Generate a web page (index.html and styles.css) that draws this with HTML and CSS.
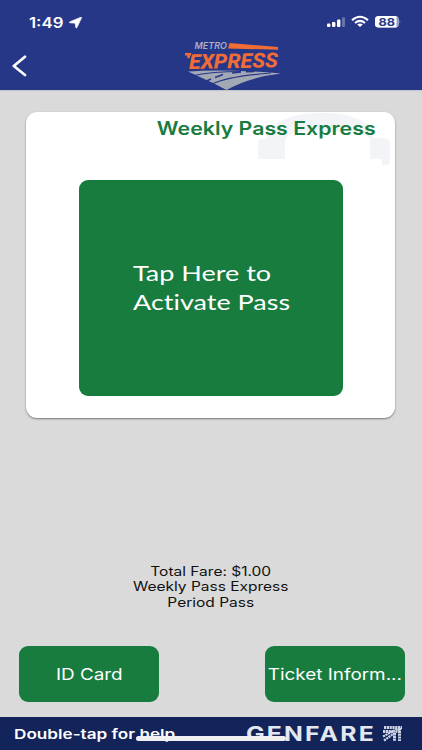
FILE: index.html
```
<!DOCTYPE html>
<html lang="en">
<head>
<meta charset="utf-8">
<title>Metro Express</title>
<link rel="stylesheet" href="styles.css">
</head>
<body>
<header class="header">
  <div class="status">
    <span class="time">1:49</span>
    <svg class="location" width="14" height="12" viewBox="0 0 14 12"><path d="M12.7.6 7.9 10.7Q7.2 11.6 6.8 10.5L6.1 6.2.8 5.8Q-.2 5.2.9 4.7L11.8.3Q12.8 0 12.7.6Z" fill="#fff" stroke="#fff" stroke-width=".6"/></svg>
    <svg class="indicators" width="76" height="14" viewBox="0 0 76 14">
      <g fill="#fff"><rect x="3" y="8.6" width="3.4" height="3.4" rx="1"/><rect x="8" y="7" width="3.4" height="5" rx="1"/><rect x="13" y="4.6" width="3.4" height="7.4" rx="1"/><rect x="18" y="2.3" width="3" height="9.7" rx="1" opacity=".3"/></g>
      <g fill="none" stroke="#fff" stroke-width="2.1"><path d="M28 5.2Q36 -1.7 44 5.2"/><path d="M31 8Q36 3.8 41 8"/></g><path d="M33.2 9.4Q36 7.5 38.8 9.4L36 12Z" fill="#fff"/>
      <rect x="51" y="1" width="24" height="11.6" rx="3.6" fill="#969dc7"/><path d="M54.6 1H72.5V12.6H54.6Q51 12.6 51 9V4.6Q51 1 54.6 1Z" fill="#fff"/><path d="M75.6 5Q77.2 6.8 75.6 8.6Z" fill="#969dc7"/>
      <text class="battery" x="54.5" y="10.8" textLength="16.5" lengthAdjust="spacingAndGlyphs">88</text>
    </svg>
  </div>
  <div class="nav">
    <svg class="back" width="16" height="22" viewBox="0 0 16 22"><path d="M14 1.8 2.8 11 14 20" fill="none" stroke="#fff" stroke-width="2.7" stroke-linecap="round" stroke-linejoin="round"/></svg>
    <svg class="logo" width="100" height="50" viewBox="0 0 100 50">
      <text class="metro" x="9.5" y="8.7" textLength="32.5" lengthAdjust="spacingAndGlyphs">METRO</text>
      <path d="M44.5 3 93 7V9.7L43 8.5Z" fill="#f26c35"/>
      <path d="M0 13H6.5L4.2 18.5 2 17.5 2.5 15.5H0Z" fill="#f26c35"/>
      <text class="express" x="4" y="29" textLength="89" lengthAdjust="spacingAndGlyphs" transform="skewY(-1)">EXPRESS</text>
      <path d="M3 31.5Q37 28.500 96 33.500 65 37 41.500 50L28 43Q16 37.500 3 31.500Z" fill="#a3a9b4"/>
      <g fill="none" stroke="#263788"><path d="M9 35.5Q27 31.5 56 31.5M27 44Q44 36 86 33" stroke-width="1.2"/><path d="m38 34.500-8 3m-4 1.500-7 3m28-9 9-1m5-.2 8-.3" stroke-width="1.400"/></g>
    </svg>
  </div>
</header>
<main class="content">
  <section class="card">
    <svg class="watermark" width="132" height="56" viewBox="0 0 132 56"><path d="M0 31Q0 27 4 27H8Q10 18 20 11 34 1 62 1 94 0 112 14 115 17 115 26H127Q132 27 132 31V49Q132 53 128 53H124V47H112V26Q104 21 90 19H40Q28 22 27 29V47H2Q0 47 0 45Z" fill="#f2f4f7"/></svg>
    <h1 class="title"><span class="wide">Weekly Pass Express</span></h1>
    <button class="activate"><span class="wide">Tap Here to<br>Activate Pass</span></button>
  </section>
  <section class="fare">
    <span class="wide">Total Fare: $1.00<br>Weekly Pass Express<br>Period Pass</span>
  </section>
  <nav class="actions">
    <button class="action"><span class="wide">ID Card</span></button>
    <button class="action"><span class="wide">Ticket Inform...</span></button>
  </nav>
</main>
<footer class="footer">
  <span class="help">Double-tap for help</span>
  <span class="brand">
    <svg width="158" height="20" viewBox="0 0 158 20">
      <text class="genfare" x="0" y="16.5" textLength="130" lengthAdjust="spacingAndGlyphs">GENFARE</text>
      <g fill="none" stroke="#cdd3e2"><path d="M138 3.500H156M137 7.500H147M153.500 4V17M148.500 9V17" stroke-width="3" stroke-dasharray="2.200 .6"/><path d="m137 12.500 15-8m-14 12 17-12" stroke-width="2.200" stroke-dasharray="2.200 .6"/></g>
    </svg>
  </span>
  <i class="home-indicator"></i>
</footer>
</body>
</html>
```
FILE: styles.css
```
* { box-sizing: border-box; }
body {
  margin: 0;
  width: 422px;
  height: 750px;
  display: flex;
  flex-direction: column;
  overflow: hidden;
  background: #dadada;
  font-family: Inter, "Liberation Sans", sans-serif;
}
button { border: 0; padding: 0; font: inherit; color: #fff; background: #187c3f; }
.wide { display: inline-block; white-space: nowrap; transform: scaleX(1.2); }
.header { height: 90px; background: #263788; color: #fff; box-shadow: 0 1px 1px #c5c5cc; }
.status { height: 40px; display: flex; align-items: flex-start; padding: 15px 22px 0 29px; }
.time { width: 40px; font-size: 14px; line-height: 15px; font-weight: 600; transform: scaleX(1.2); transform-origin: left; }
.location { margin-top: 2px; }
.indicators { margin-left: auto; overflow: visible; }
.battery { font: 700 11px Inter, sans-serif; fill: #263788; }
.nav { height: 50px; display: flex; align-items: flex-start; padding-left: 11px; }
.back { margin-top: 15px; }
.logo { margin-left: 158px; }
.metro { font: italic 600 9px Inter, sans-serif; fill: #a9b0c2; }
.express { font: italic 800 20.5px Roboto, sans-serif; fill: #f26c35; }
.content { height: 627px; display: flex; flex-direction: column; }
.card {
  position: relative;
  width: 369px;
  height: 306px;
  margin: 22px 0 0 26.4px;
  padding-top: 6px;
  border-radius: 11px;
  background: #fff;
  box-shadow: 0 1px 2px #777;
}
.watermark { position: absolute; top: 0; right: 5px; }
.title { position: relative; margin: 0 20px 0 0; text-align: right; font-size: 18px; line-height: 22px; font-weight: 600; color: #187c3f; }
.title .wide { transform: scaleX(1.185); transform-origin: right; }
.activate {
  display: flex;
  align-items: center;
  width: 264px;
  height: 216px;
  margin: 40px 0 0 52.6px;
  padding-left: 54px;
  border-radius: 9px;
  text-align: left;
  font: 21.5px/29px Lato, sans-serif;
  font-variant-ligatures: none;
}
.activate .wide { transform: translateY(-.5px) scaleX(1.255); transform-origin: left; }
.fare { margin-top: 146px; text-align: center; font-size: 12.5px; line-height: 15.4px; color: #111; }
.fare .wide { transform: scaleX(1.24); }
.actions { display: flex; justify-content: space-between; margin: auto 17px 15px 19px; }
.action { width: 140px; height: 56px; border-radius: 9px; font-size: 16px; display: flex; align-items: center; justify-content: center; }
.action .wide { transform: scaleX(1.18); }
.footer { position: relative; height: 33px; display: flex; align-items: center; padding: 0 18px 0 14px; background: #12245a; color: #fff; }
.help { white-space: nowrap; font-size: 13.5px; font-weight: 600; transform: scaleX(1.27); transform-origin: left; }
.brand { margin-left: auto; height: 20px; }
.brand svg { display: block; overflow: visible; }
.genfare { font: 700 20px Inter, sans-serif; letter-spacing: 1.8px; fill: #e3e7f0; }
.home-indicator { position: absolute; left: 136px; top: 19px; width: 150px; height: 5px; border-radius: 3px; background: #f0f0f2; }
```
